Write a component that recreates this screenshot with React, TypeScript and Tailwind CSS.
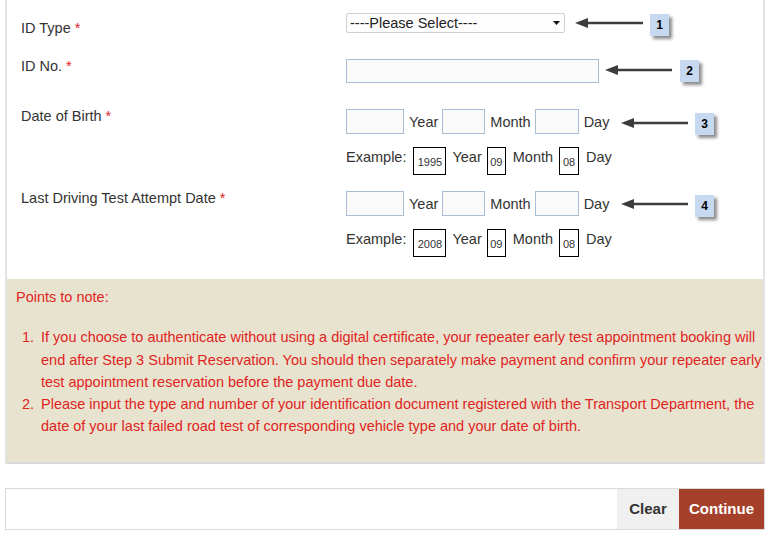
import React from 'react'

const Req = () => <span className="text-[#e0231f]"> *</span>

function DateInputs() {
  return (
    <div className="flex items-center leading-5">
      <input className="w-[58px] h-[25px] border border-[#a9bdd5] bg-[#fafafa]" />
      <span className="ml-[5px]">Year</span>
      <input className="ml-[4px] w-[43px] h-[25px] border border-[#a9bdd5] bg-[#fafafa]" />
      <span className="ml-[5px]">Month</span>
      <input className="ml-[4px] w-[44px] h-[25px] border border-[#a9bdd5] bg-[#fafafa]" />
      <span className="ml-[5px]">Day</span>
    </div>
  )
}

function ExBox({ value, w }: { value: string; w: string }) {
  return (
    <span className={`${w} h-[28px] border border-black flex items-center justify-center pt-[2px] text-[11px] text-[#333]`}>
      {value}
    </span>
  )
}

function Example({ year }: { year: string }) {
  return (
    <div className="flex items-start leading-5 mt-[13px]">
      <span>Example:</span>
      <span className="ml-[7px]"><ExBox value={year} w="w-[33px]" /></span>
      <span className="ml-[6px]">Year</span>
      <span className="ml-[5px]"><ExBox value="09" w="w-[19px]" /></span>
      <span className="ml-[7px]">Month</span>
      <span className="ml-[6px]"><ExBox value="08" w="w-[20px]" /></span>
      <span className="ml-[7px]">Day</span>
    </div>
  )
}

// annotation arrow pointing left, with numbered badge
function Pointer({ tip, end, y, bx, by, n }: { tip: number; end: number; y: number; bx: number; by: number; n: number }) {
  return (
    <>
      <svg className="absolute" style={{ left: tip, top: y - 6 }} width={end - tip} height={12}>
        <polygon points={`0,6 13,1 13,11`} fill="#3d3d3d" />
        <line x1={12} y1={6} x2={end - tip} y2={6} stroke="#3d3d3d" strokeWidth={2.5} />
      </svg>
      <div
        className="absolute w-[19px] h-[22px] bg-[#c6d9f0] shadow-[3px_3px_3px_rgba(0,0,0,0.45)] flex items-center justify-center text-[12px] font-bold text-black"
        style={{ left: bx, top: by }}
      >
        {n}
      </div>
    </>
  )
}

export default function App() {
  return (
    <div className="relative w-[770px] h-[539px] bg-white text-[14.5px] text-[#333]" style={{ fontFamily: '"Liberation Sans", Arial, sans-serif' }}>
      <div className="ml-[5px] w-[760px] border-x-2 border-[#e3e3e3]">
        {/* form */}
        <div className="h-[279px] pl-[14px]">
          <div className="flex items-start pt-[13px]">
            <div className="w-[325px] mt-[5px] leading-5">ID Type<Req /></div>
            <div className="w-[219px] h-[20px] border border-[#cfcfcf] rounded-[2px] bg-[#fdfdfd] flex items-center justify-between pl-[3px] pr-[4px] text-[#222] leading-5">
              <span>----Please Select----</span>
              <svg width="7" height="4"><polygon points="0,0 7,0 3.5,4" fill="#111" /></svg>
            </div>
          </div>

          <div className="flex items-start mt-[18px]">
            <div className="w-[325px] leading-5">ID No.<Req /></div>
            <input className="mt-[3px] w-[253px] h-[24px] border border-[#a9bdd5] bg-[#fafafa]" />
          </div>

          <div className="flex items-start mt-[23px]">
            <div className="w-[325px] leading-5">Date of Birth<Req /></div>
            <div className="mt-[3px]">
              <DateInputs />
              <Example year="1995" />
            </div>
          </div>

          <div className="flex items-start mt-[13px]">
            <div className="w-[325px] leading-5">Last Driving Test Attempt Date<Req /></div>
            <div className="mt-[3px]">
              <DateInputs />
              <Example year="2008" />
            </div>
          </div>
        </div>

        {/* notes */}
        <div className="bg-[#e8e3ce] border-b-2 border-[#d8d8d8] pl-[9px] pt-[7px] pb-[24px] text-[#e0231f] leading-[22.3px]">
          <div>Points to note:</div>
          <div className="mt-[18px]">
            <div className="flex">
              <span className="w-[18px] text-right shrink-0">1.</span>
              <span className="ml-[7px] flex-1">
                If you choose to authenticate without using a digital certificate, your repeater early test appointment booking will end after Step 3 Submit Reservation. You should then separately make payment and confirm your repeater early test appointment reservation before the payment due date.
              </span>
            </div>
            <div className="flex">
              <span className="w-[18px] text-right shrink-0">2.</span>
              <span className="ml-[7px] flex-1">
                Please input the type and number of your identification document registered with the Transport Department, the date of your last failed road test of corresponding vehicle type and your date of birth.
              </span>
            </div>
          </div>
        </div>
      </div>

      {/* footer */}
      <div className="ml-[5px] mt-[24px] w-[760px] h-[42px] border border-[#dadada] flex justify-end">
        <button className="w-[62px] bg-[#f0f0f0] text-[15px] font-bold text-[#333]">Clear</button>
        <button className="w-[85px] bg-[#a5402a] text-[15px] font-bold text-white">Continue</button>
      </div>

      <Pointer tip={575} end={643} y={23} bx={650} by={14} n={1} />
      <Pointer tip={605} end={672} y={70} bx={680} by={60} n={2} />
      <Pointer tip={621} end={688} y={123} bx={695} by={113} n={3} />
      <Pointer tip={621} end={688} y={204} bx={695} by={195} n={4} />
    </div>
  )
}
